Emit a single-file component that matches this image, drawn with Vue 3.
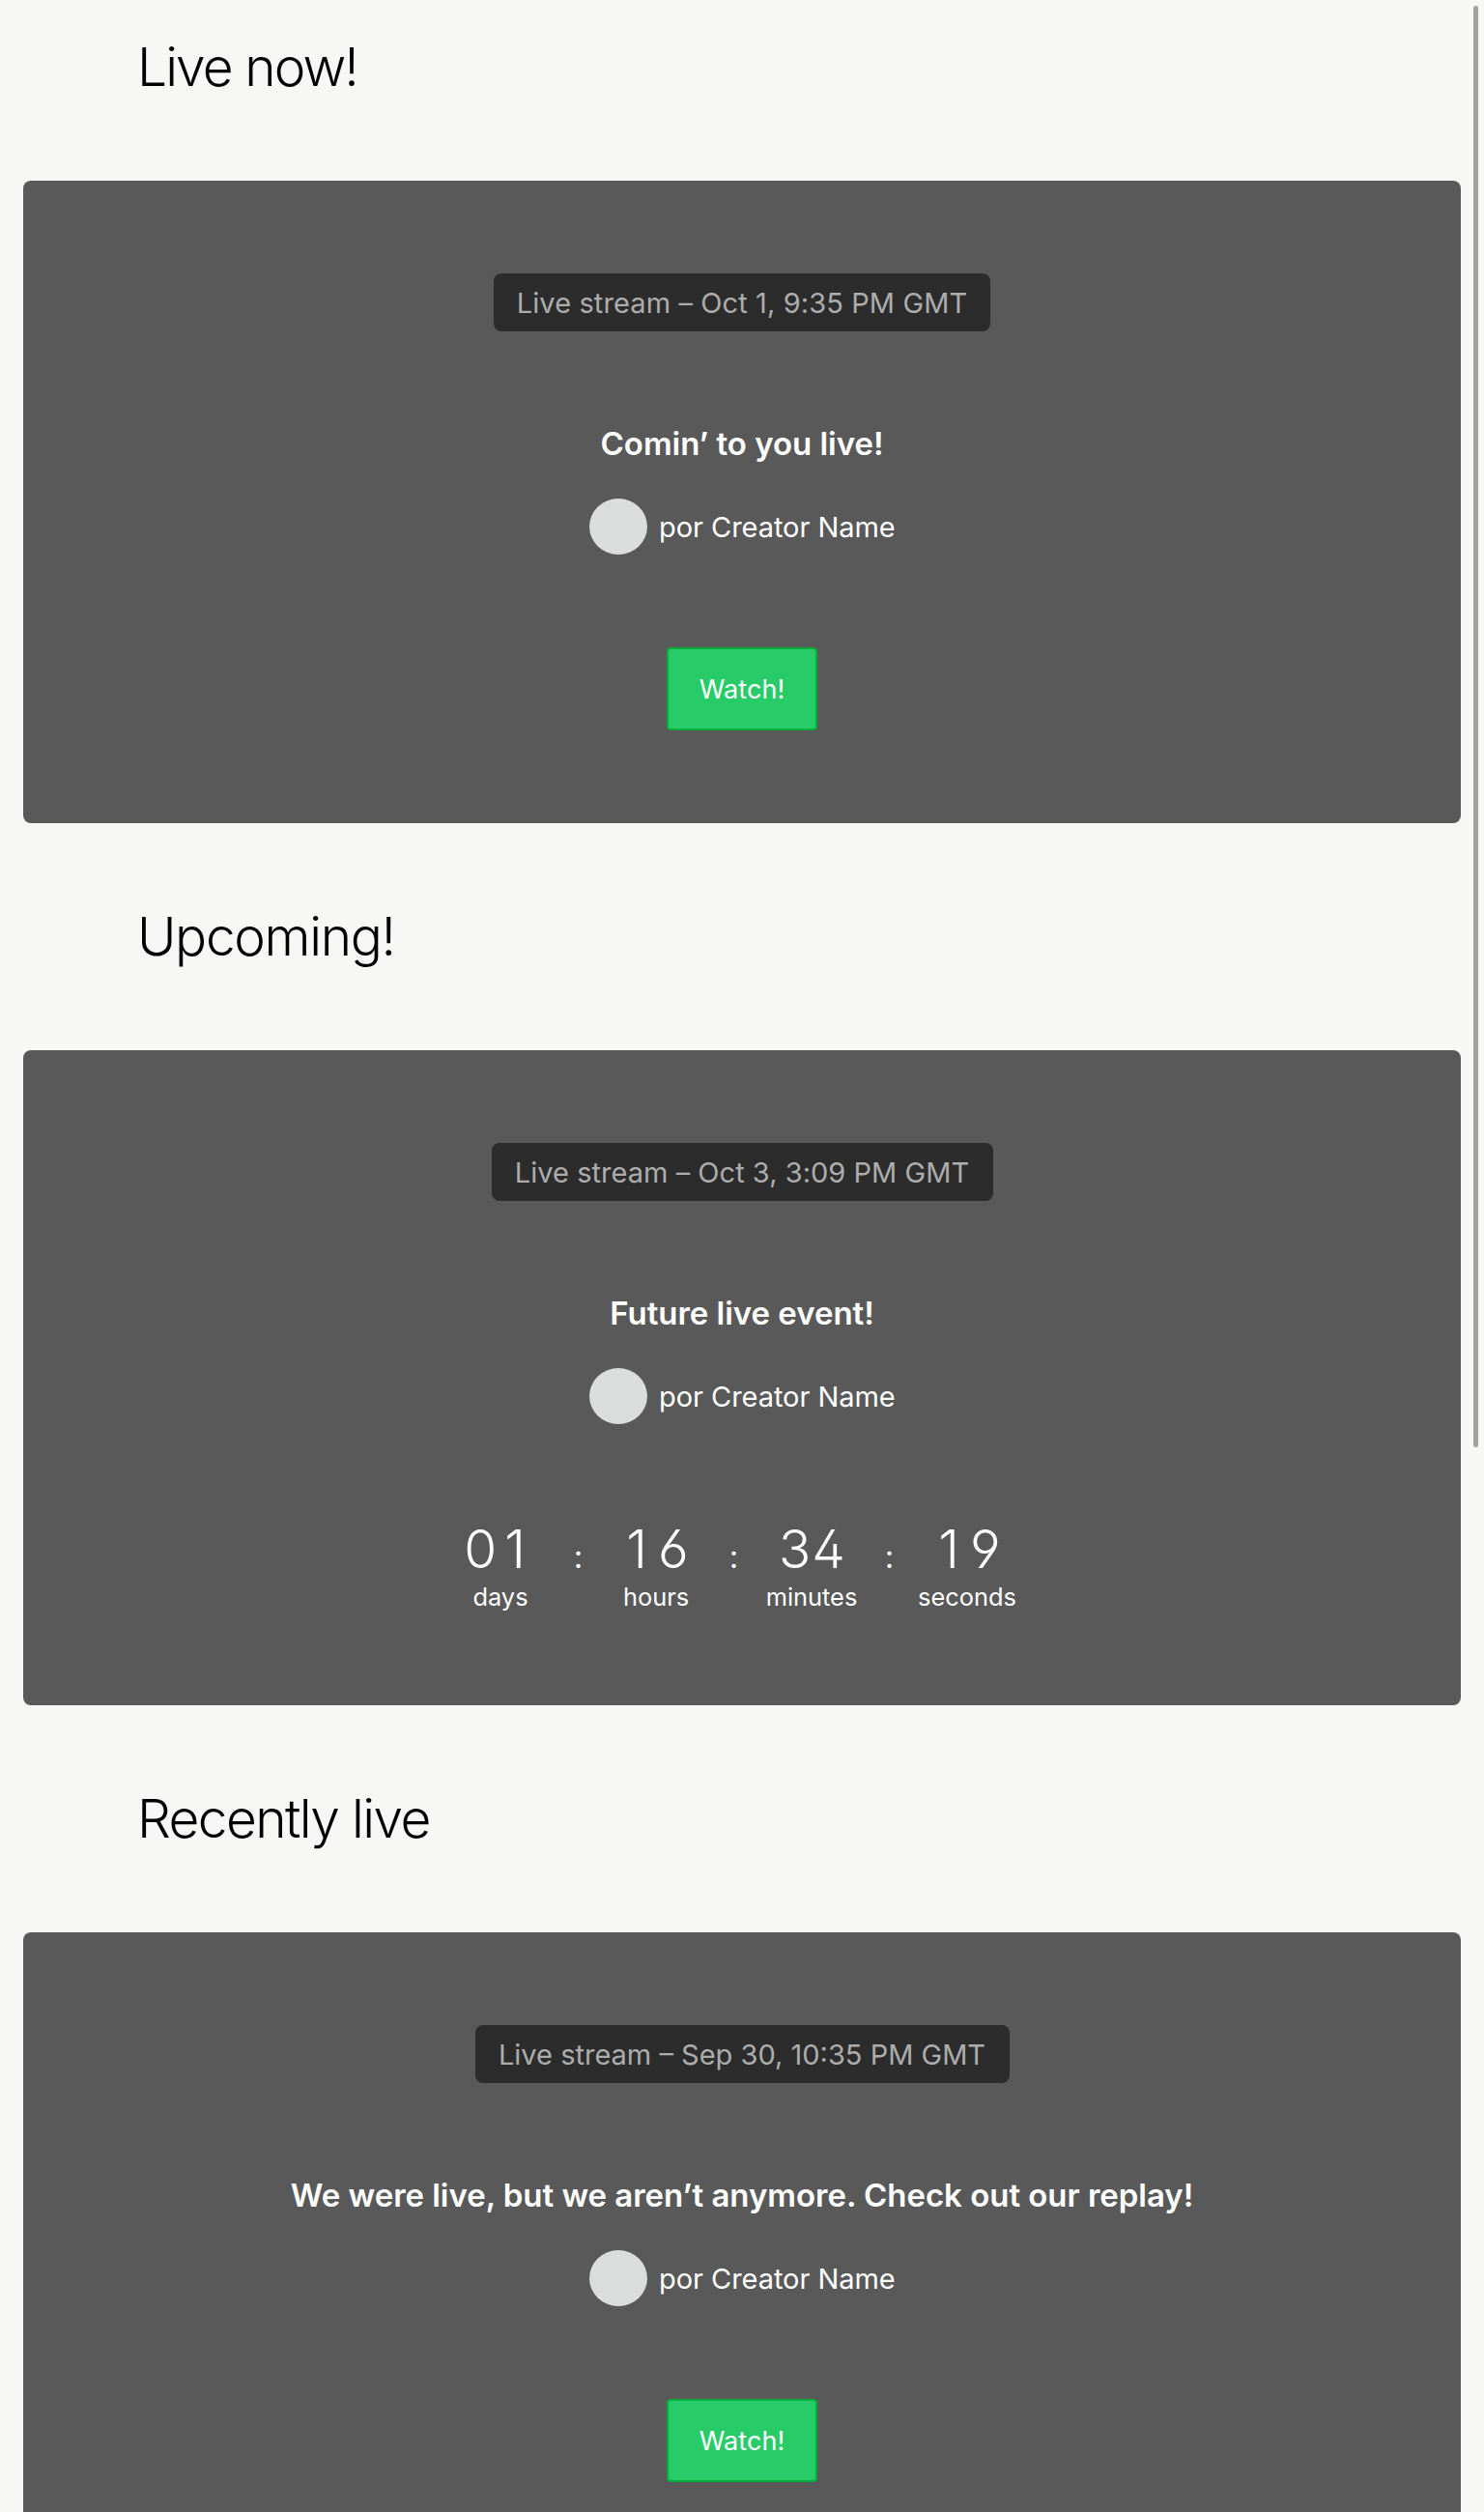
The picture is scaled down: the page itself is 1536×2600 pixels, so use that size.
<script setup>
const sections = [
  { heading: 'Live now!', kind: 'now', date: 'Oct 1, 9:35 PM GMT', title: 'Comin’ to you live!' },
  {
    heading: 'Upcoming!', kind: 'upcoming', date: 'Oct 3, 3:09 PM GMT', title: 'Future live event!',
    countdown: [
      { value: '01', unit: 'days' },
      { value: '16', unit: 'hours' },
      { value: '34', unit: 'minutes' },
      { value: '19', unit: 'seconds' },
    ],
  },
  { heading: 'Recently live', kind: 'recent', date: 'Sep 30, 10:35 PM GMT', title: 'We were live, but we aren’t anymore. Check out our replay!' },
]
</script>

<template>
  <main class="page">
    <section v-for="s in sections" :key="s.kind" class="section" :class="s.kind">
      <h2 class="heading"><span>{{ s.heading }}</span></h2>
      <article class="card">
        <div class="badge"><span>Live stream – {{ s.date }}</span></div>
        <h3 class="title"><span>{{ s.title }}</span></h3>
        <div class="creator">
          <i class="avatar"></i>
          <span class="name">por Creator Name</span>
        </div>
        <div v-if="s.countdown" class="countdown">
          <template v-for="(c, i) in s.countdown" :key="c.unit">
            <b v-if="i" class="colon">:</b>
            <div class="cell" :class="c.unit">
              <span class="value">{{ c.value }}</span>
              <span class="unit">{{ c.unit }}</span>
            </div>
          </template>
        </div>
        <button v-else class="watch">Watch!</button>
      </article>
    </section>
    <div class="scrollbar"></div>
  </main>
</template>

<style>
body { margin: 0; background: #f7f8f6; }
</style>

<style scoped>
.page {
  position: relative;
  height: 2600px;
  overflow: hidden;
  background: #f7f8f6;
  color: #000;
  font-family: Inter, "Liberation Sans", sans-serif;
}
.section { padding: 0 24px; }
.heading {
  margin: 0;
  height: 187px;
  box-sizing: border-box;
  padding: 36px 0 0 118px;
  font-size: 55px;
  line-height: 66px;
  font-weight: 300;
  letter-spacing: -1.9px;
}
.upcoming .heading, .recent .heading { height: 235px; padding-top: 84px; }
.upcoming .heading { letter-spacing: -1.35px; }
.recent .heading { letter-spacing: -1.6px; }
.card {
  display: flex;
  flex-direction: column;
  align-items: center;
  box-sizing: border-box;
  height: 665px;
  padding-top: 96px;
  border-radius: 8px;
  background: #595959;
  color: #fff;
}
.upcoming .card { height: 678px; }
.badge {
  box-sizing: border-box;
  width: 514px;
  height: 60px;
  border-radius: 8px;
  background: #2c2c2c;
  color: #adadad;
  font-size: 29px;
  line-height: 61px;
  letter-spacing: 0.1px;
  text-align: center;
  white-space: nowrap;
}
.upcoming .badge { width: 519px; letter-spacing: 0.03px; }
.recent .badge { width: 553px; letter-spacing: 0; }
.title {
  margin: 92px 0 0;
  height: 48px;
  font-size: 33px;
  line-height: 48px;
  font-weight: 600;
  letter-spacing: -0.03px;
  white-space: nowrap;
}
.creator {
  display: flex;
  align-items: center;
  gap: 12px;
  width: 316px;
  height: 58px;
  margin-top: 33px;
}
.avatar {
  width: 60px;
  height: 58px;
  flex: none;
  border-radius: 50%;
  background: #dbdddc;
}
.name {
  padding-top: 2px;
  font-size: 29px;
  line-height: 58px;
  letter-spacing: -0.05px;
  white-space: nowrap;
}
.watch {
  box-sizing: border-box;
  width: 156px;
  height: 86px;
  margin-top: 96px;
  padding: 1px 0 0;
  border: 2px solid #06ae3c;
  border-radius: 4px;
  background: #27cc69;
  color: #fff;
  font: 400 27px/81px Inter, "Liberation Sans", sans-serif;
  letter-spacing: 0.1px;
}
.countdown {
  display: flex;
  justify-content: center;
  margin-top: 96px;
  margin-left: -17px;
}
.cell {
  display: flex;
  flex-direction: column;
  align-items: center;
  width: 125px;
}
.value {
  font-size: 55px;
  line-height: 66px;
  font-weight: 300;
  font-feature-settings: "cv02", "cv03", "cv04";
}
/* Even out the pairs that contain a narrow "1" */
.days .value { margin-right: 4px; letter-spacing: 8px; }
.hours .value { margin-left: 14px; letter-spacing: 11px; }
.minutes .value { margin-left: 2px; letter-spacing: 1px; }
.seconds .value { margin-left: 16px; letter-spacing: 11px; }
.unit { font-size: 25.4px; line-height: 34px; }
.colon {
  width: 36px;
  font-size: 33px;
  line-height: 82px;
  font-weight: 400;
  text-align: center;
}
.scrollbar {
  position: absolute;
  top: 6px;
  left: 1525px;
  width: 5px;
  height: 1492px;
  border-radius: 3px;
  background: #a1a19f;
}
</style>
